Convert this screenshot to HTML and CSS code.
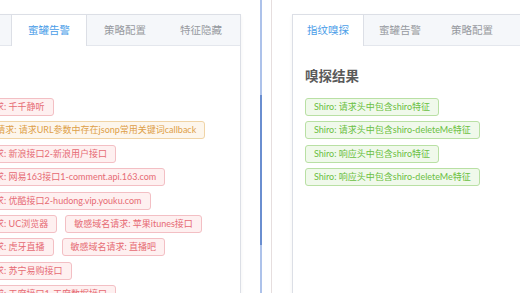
FILE: index.html
```html
<!DOCTYPE html>
<html lang="zh-CN">

<head>
    <meta charset="UTF-8">
    <title>嗅探结果</title>
    <link rel="stylesheet" href="styles.css">
</head>

<body>
    <div class="split">
        <section class="pane pane-left">
            <div class="card card-left">
                <div class="tabs">
                    <span class="tab">指纹嗅探</span>
                    <span class="tab active">蜜罐告警</span>
                    <span class="tab">策略配置</span>
                    <span class="tab">特征隐藏</span>
                </div>
                <div class="card-body">
                    <h3 class="title">告警结果</h3>
                    <div class="tag-list">
                        <div class="tag-row"><span class="tag danger">敏感域名请求: 千千静听</span></div>
                        <div class="tag-row"><span class="tag warning">JSONP劫持请求: 请求URL参数中存在jsonp常用关键词callback</span></div>
                        <div class="tag-row"><span class="tag danger">敏感域名请求: 新浪接口2-新浪用户接口</span></div>
                        <div class="tag-row"><span class="tag danger">敏感域名请求: 网易163接口1-comment.api.163.com</span></div>
                        <div class="tag-row"><span class="tag danger">敏感域名请求: 优酷接口2-hudong.vip.youku.com</span></div>
                        <div class="tag-row">
                            <span class="tag danger">敏感域名请求: UC浏览器</span>
                            <span class="tag danger">敏感域名请求: 苹果itunes接口</span>
                        </div>
                        <div class="tag-row">
                            <span class="tag danger">敏感域名请求: 虎牙直播</span>
                            <span class="tag danger">敏感域名请求: 直播吧</span>
                        </div>
                        <div class="tag-row"><span class="tag danger">敏感域名请求: 苏宁易购接口</span></div>
                        <div class="tag-row"><span class="tag danger">敏感域名请求: 天府接口1-天府数据接口</span></div>
                    </div>
                </div>
            </div>
        </section>

        <!-- 分隔条 -->
        <div class="splitter"><span class="thumb"></span></div>

        <section class="pane pane-right">
            <div class="card card-right">
                <div class="tabs">
                    <span class="tab active">指纹嗅探</span>
                    <span class="tab">蜜罐告警</span>
                    <span class="tab">策略配置</span>
                    <span class="tab">特征隐藏</span>
                </div>
                <div class="card-body">
                    <h3 class="title">嗅探结果</h3>
                    <div class="tag-list">
                        <span class="tag success">Shiro: 请求头中包含shiro特征</span>
                        <span class="tag success">Shiro: 请求头中包含shiro-deleteMe特征</span>
                        <span class="tag success">Shiro: 响应头中包含shiro特征</span>
                        <span class="tag success">Shiro: 响应头中包含shiro-deleteMe特征</span>
                    </div>
                </div>
            </div>
        </section>
    </div>
</body>

</html>
```

FILE: styles.css
```css
html,
body {
    margin: 0;
    height: 100%;
    overflow: hidden;
    background: #fff;
    font-family: Lato, "Noto Sans CJK SC", sans-serif;
}

.split {
    display: flex;
    height: 293px;
}

.pane {
    overflow: hidden;
}

.pane-left {
    flex: none;
    width: 260px;
}

.pane-right {
    flex: 1;
    margin-left: 9px;
    border-left: 1px solid #e6dede;
}

/* 中间的滚动条 */
.splitter {
    flex: none;
    display: flex;
    flex-direction: column;
    width: 2px;
    background: #adc2ea;
}

.thumb {
    margin-top: 95px;
    height: 150px;
    background: #6a8ed0;
}

.card {
    min-height: 400px;
    background: #fff;
    border: 1px solid #dcdfe6;
    box-shadow: 0 2px 4px rgba(0, 0, 0, .05);
}

.card-left {
    width: 311px;
    margin: 14px 0 0 -72px;
}

.card-right {
    width: 320px;
    margin: 14px 0 0 20px;
}

.tabs {
    display: flex;
    height: 30px;
    background: #f5f7fa;
    border-bottom: 1px solid #e4e7ed;
}

.tab {
    flex: none;
    box-sizing: border-box;
    width: 72px;
    height: 30px;
    line-height: 30px;
    text-align: center;
    font-size: 10.5px;
    color: #979aa0;
    border-left: 1px solid transparent;
    border-right: 1px solid transparent;
}

.tab:first-child {
    margin-left: -1px;
}

.tab.active {
    height: 31px;
    background: #fff;
    color: #4a9de8;
    border-color: #dcdfe6;
}

.card-left .tabs {
    padding-left: 7px;
}

.card-left .tab {
    width: 76px;
}

.card-body {
    padding: 11px 12px;
}

.title {
    margin: 10px 0 13px;
    font-size: 13.5px;
    line-height: 18px;
    font-weight: bold;
    color: #5a5a5a;
}

.tag-list {
    display: flex;
    flex-direction: column;
    align-items: flex-start;
    gap: 5.4px;
}

.tag-row {
    display: flex;
    gap: 8px;
}

.tag {
    display: inline-block;
    box-sizing: border-box;
    height: 18px;
    line-height: 16px;
    padding: 0 8px;
    font-size: 9px;
    white-space: nowrap;
    border: 1px solid;
    border-radius: 3px;
}

.tag.danger {
    background: #fef0f0;
    border-color: #f3bfc4;
    color: #e66a73;
}

.tag.warning {
    background: #fdf6ec;
    border-color: #f0d4a6;
    color: #dd9f48;
}

.tag.success {
    background: #f0f9eb;
    border-color: #b9e0a4;
    color: #6abf42;
}
```
